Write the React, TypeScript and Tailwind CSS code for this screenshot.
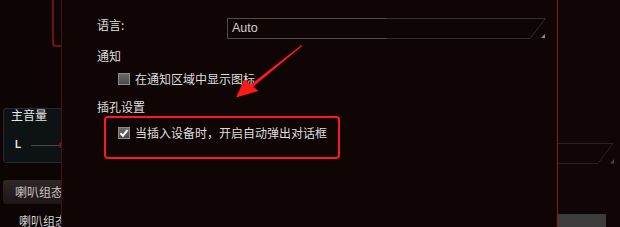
const cjk = { fontFamily: '"Noto Sans CJK SC", "Noto Sans", sans-serif' };

function Checkbox({ checked }: { checked?: boolean }) {
  return (
    <div className="flex h-[12px] w-[12px] shrink-0 items-center justify-center border border-[#8a8a8a] bg-gradient-to-b from-[#6a6a6a] to-[#4a4a4a]">
      {checked && (
        <svg width="10" height="10" viewBox="0 0 10 10">
          <path d="M1.5 5.2 L4 7.8 L8.6 1.8" stroke="#ffffff" strokeWidth="2" fill="none" />
        </svg>
      )}
    </div>
  );
}

export default function App() {
  return (
    <div className="flex h-[227px] w-[620px] overflow-hidden bg-[#0c0405] text-[12px]" style={cjk}>
      {/* background app, left side */}
      <div className="w-[61px] shrink-0 overflow-hidden">
        <div className="ml-[52px] h-[47px] w-[20px] rounded-bl-[4px] border-b-2 border-l-2 border-[#6e1212]" />
        <div className="ml-[3px] mt-[61px] h-[55px] w-[80px] rounded-[3px] border border-[#262b2e] bg-[#0d1215]">
          <div className="-mt-[1px] whitespace-nowrap pl-[7px] leading-[14px] text-[#e6e6e6]">主音量</div>
          <div className="mt-[17px] flex items-center">
            <span className="ml-[11px] text-[10px] font-bold leading-[12px] text-[#e6e6e6]" style={{ fontFamily: '"Liberation Sans", sans-serif' }}>
              L
            </span>
            <div className="ml-[10px] h-px w-[28px] bg-[#4a4a4a]" />
            <div className="h-[6px] w-[6px] rounded-full bg-[#a01010]" />
          </div>
        </div>
        <div className="ml-[3px] mt-[17px] flex h-[24px] w-[80px] items-center whitespace-nowrap rounded-[3px] bg-gradient-to-b from-[#302727] to-[#1d1616] pl-[12px] text-[#c8c2c2]">
          喇叭组态
        </div>
        <div className="ml-[19px] mt-[9px] w-[80px] whitespace-nowrap leading-[16px] text-[#d0d0d0]">喇叭组态</div>
      </div>

      {/* settings dialog */}
      <div className="relative w-[497px] shrink-0 border-l border-r border-l-[#4c0d0d] border-r-[#8c1717] bg-[#100505] pl-[35px] text-[#dedede]">
        <div className="mt-[17px] flex h-[22px] items-start">
          <div className="w-[130px] leading-[16px]">语言:</div>
          <div className="relative mt-[1px] h-[21px] w-[319px]">
            <svg className="absolute inset-0" width="319" height="21" viewBox="0 0 319 21">
              <path d="M160 0.5 H318.5 L303 20.5 H160" stroke="#303030" fill="none" />
              <path d="M160 0.5 H0.5 V20.5 H160" stroke="#4e4e4e" fill="none" />
              <path d="M318 16 V20 H314 Z" fill="#8a8a8a" />
            </svg>
            <div className="relative pl-[5px] leading-[21px] text-[#cfcfcf]" style={{ fontFamily: '"Liberation Sans", sans-serif', fontSize: 12.5 }}>
              Auto
            </div>
          </div>
        </div>

        <div className="mt-[9px] leading-[16px]">通知</div>
        <div className="ml-[21px] mt-[7px] flex h-[16px] items-center gap-[5px]">
          <Checkbox />
          <span className="leading-[16px]">在通知区域中显示图标</span>
        </div>

        <div className="mt-[12px] leading-[16px]">插孔设置</div>
        <div className="ml-[7px] mt-[1px] h-[43px] w-[236px] rounded-[4px] border-2 border-[#ff1a1a] pl-[12px] pt-[7px]">
          <div className="flex h-[16px] items-center gap-[5px]">
            <Checkbox checked />
            <span className="whitespace-nowrap leading-[16px]">当插入设备时，开启自动弹出对话框</span>
          </div>
        </div>

        {/* annotation arrow */}
        <svg className="pointer-events-none absolute left-0 top-0" width="497" height="227" viewBox="61 0 497 227">
          <path d="M300.5 45 L301.2 46 L250.5 88 L248.5 85.5 Z" fill="#ff1a1a" />
          <path d="M235 97.5 L243.5 79.5 L257.5 91 Z" fill="#ff1a1a" />
        </svg>
      </div>

      {/* background app, right side */}
      <div className="flex-1 bg-[#110607]">
        <svg className="mt-[142px] block" width="61" height="22" viewBox="0 0 61 22">
          <path d="M0 1.5 H55 L40 21.5 H0" stroke="#2a2121" fill="none" />
          <path d="M56 17 V21.5 H52 Z" fill="#4a4444" />
        </svg>
        <div className="mt-[50px] h-[13px] w-[48px] bg-[#3c3c3c]" />
      </div>
    </div>
  );
}
